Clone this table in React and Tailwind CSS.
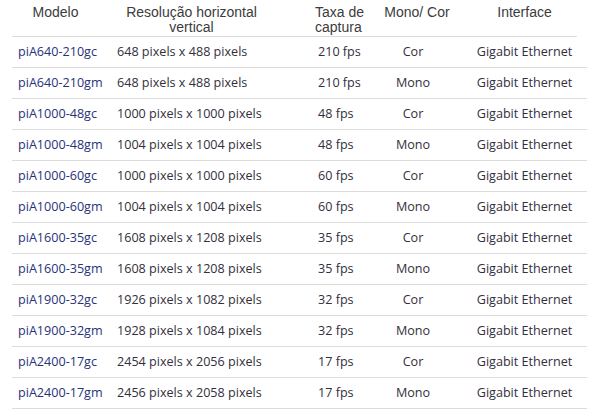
import React from 'react';

const rows = [
  ['piA640-210gc', '648 pixels x 488 pixels', '210 fps', 'Cor'],
  ['piA640-210gm', '648 pixels x 488 pixels', '210 fps', 'Mono'],
  ['piA1000-48gc', '1000 pixels x 1000 pixels', '48 fps', 'Cor'],
  ['piA1000-48gm', '1004 pixels x 1004 pixels', '48 fps', 'Mono'],
  ['piA1000-60gc', '1000 pixels x 1000 pixels', '60 fps', 'Cor'],
  ['piA1000-60gm', '1004 pixels x 1004 pixels', '60 fps', 'Mono'],
  ['piA1600-35gc', '1608 pixels x 1208 pixels', '35 fps', 'Cor'],
  ['piA1600-35gm', '1608 pixels x 1208 pixels', '35 fps', 'Mono'],
  ['piA1900-32gc', '1926 pixels x 1082 pixels', '32 fps', 'Cor'],
  ['piA1900-32gm', '1928 pixels x 1084 pixels', '32 fps', 'Mono'],
  ['piA2400-17gc', '2454 pixels x 2056 pixels', '17 fps', 'Cor'],
  ['piA2400-17gm', '2456 pixels x 2058 pixels', '17 fps', 'Mono'],
];

const cols = 'grid grid-cols-[87px_185px_88px_90px_125px]';

export default function App() {
  return (
    <div className="w-[595px] h-[420px] bg-white pl-[12px] overflow-hidden">
      {/* Header */}
      <div
        className={`${cols} h-[37px] w-[565px] border-b border-[#dcdcdc] text-[14px] leading-[15px] text-[#3c3c3c] pt-[5px]`}
        style={{ fontFamily: '"Liberation Sans", Arial, sans-serif' }}
      >
        <div className="text-center">Modelo</div>
        <div className="text-center">Resolução horizontal<br />vertical</div>
        <div className="pl-[31px]">Taxa de<br />captura</div>
        <div className="text-center">Mono/ Cor</div>
        <div className="text-center">Interface</div>
      </div>

      {/* Rows */}
      <div style={{ fontFamily: '"Open Sans", "Noto Sans", sans-serif' }} className="text-[12.6px] text-[#332f3c] whitespace-nowrap">
        {rows.map(([model, res, fps, mono]) => (
          <div key={model} className={`${cols} h-[31px] w-[575px] border-b border-[#dcdcdc] items-center`}>
            <div className="pl-[6px] text-[#28337a]">{model}</div>
            <div className="pl-[18px]">{res}</div>
            <div className="pl-[34px]">{fps}</div>
            <div className="text-center pr-[8px]">{mono}</div>
            <div className="text-center">Gigabit Ethernet</div>
          </div>
        ))}
      </div>
    </div>
  );
}
